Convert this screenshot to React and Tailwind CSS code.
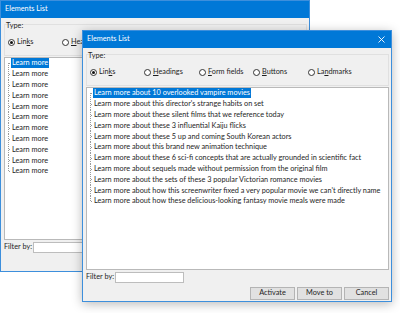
import React from 'react'

const longItems = [
    'Learn more about 10 overlooked vampire movies',
    "Learn more about this director's strange habits on set",
    'Learn more about these silent films that we reference today',
    'Learn more about these 3 influential Kaiju flicks',
    'Learn more about these 5 up and coming South Korean actors',
    'Learn more about this brand new animation technique',
    'Learn more about these 6 sci-fi concepts that are actually grounded in scientific fact',
    'Learn more about sequels made without permission from the original film',
    'Learn more about the sets of these 3 popular Victorian romance movies',
    "Learn more about how this screenwriter fixed a very popular movie we can't directly name",
    'Learn more about how these delicious-looking fantasy movie meals were made'
]

const shortItems = Array(11).fill('Learn more')

const radios = [
    { pre: 'Lin', key: 'k', post: 's', w: 'w-[54px]', checked: true },
    { pre: '', key: 'H', post: 'eadings', w: 'w-[55px]' },
    { pre: '', key: 'F', post: 'orm fields', w: 'w-[54px]' },
    { pre: '', key: 'B', post: 'uttons', w: 'w-[55px]' },
    { pre: 'La', key: 'n', post: 'dmarks', w: 'w-[60px]' }
]

function Radio({ r }) {
    return (
        <div className={`${r.w} shrink-0 flex items-center gap-[2px]`}>
            <span className="w-[7px] h-[7px] rounded-full border border-[#333] bg-white flex items-center justify-center">
                {r.checked && <span className="w-[3px] h-[3px] rounded-full bg-[#111]" />}
            </span>
            <span className="whitespace-nowrap">
                {r.pre}<span className="underline underline-offset-1">{r.key}</span>{r.post}
            </span>
        </div>
    )
}

function TreeStub({ first, last }) {
    return (
        <svg width="5" height="10.8" className="shrink-0" shapeRendering="crispEdges">
            <line x1="2.5" y1={first ? 5.4 : 0} x2="2.5" y2={last ? 5.4 : 10.8} stroke="#9a9a9a" strokeWidth="1" strokeDasharray="1 1" />
            <line x1="2.5" y1="5.5" x2="5" y2="5.5" stroke="#9a9a9a" strokeWidth="1" strokeDasharray="1 1" />
        </svg>
    )
}

function Dialog({ items, className, active }) {
    return (
        <div className={`w-[310px] h-[272px] border border-[#3d8fdc] bg-[#f0f0f0] flex flex-col ${className}`}>
            {/* Title bar */}
            <div className="h-[17px] shrink-0 bg-[#0078d7] text-white flex items-center justify-between pl-[4px] pr-[6px]">
                <span>Elements List</span>
                {active && (
                    <svg width="7" height="7" viewBox="0 0 7 7">
                        <path d="M0.5 0.5 L6.5 6.5 M6.5 0.5 L0.5 6.5" stroke="#fff" strokeWidth="0.9" />
                    </svg>
                )}
            </div>

            {/* Type group */}
            <div className="mt-[6px] ml-[3px] mr-[2px] h-[32px] shrink-0 border border-[#e0e0e0] flex flex-col">
                <div className="-mt-[4px] h-[10px] leading-[10px] pl-[1px]">Type:</div>
                <div className="mt-[6px] h-[10px] flex items-center pl-[3px]">
                    {radios.map((r, i) => <Radio key={i} r={r} />)}
                </div>
            </div>

            {/* List */}
            <div className="mt-[1px] ml-[3px] mr-[2px] h-[183px] shrink-0 bg-white border border-[#b9b9b9] overflow-hidden">
                <div className="pl-[1px]">
                    {items.map((item, i) => (
                        <div key={i} className="h-[10.8px] flex items-center">
                            <TreeStub first={i === 0} last={i === items.length - 1} />
                            <span className={`h-[10px] leading-[10px] px-[1px] whitespace-nowrap ${i === 0 ? 'bg-[#0078d7] text-white' : ''}`}>
                                {item}
                            </span>
                        </div>
                    ))}
                </div>
            </div>

            {/* Filter */}
            <div className="mt-[2px] h-[11px] shrink-0 flex items-center pl-[3px]">
                <span className="w-[29px] shrink-0 whitespace-nowrap">Filter by:</span>
                <div className="w-[69px] h-[11px] bg-white border border-[#bdbdbd]" />
            </div>

            {/* Buttons */}
            <div className="mt-[4px] h-[13px] shrink-0 flex justify-end gap-[2px] mr-[2px]">
                <div className="w-[45px] h-[13px] bg-[#e1e1e1] border border-[#b4b4b4] flex items-center justify-center">Activate</div>
                <div className="w-[45px] h-[13px] bg-[#e1e1e1] border border-[#b4b4b4] flex items-center justify-center">Move to</div>
                <div className="w-[45px] h-[13px] bg-[#e1e1e1] border border-[#b4b4b4] flex items-center justify-center">Cancel</div>
            </div>
        </div>
    )
}

export default function App() {
    return (
        <div
            className="relative w-[400px] h-[313px] bg-white overflow-hidden text-[7.3px] text-[#1e1e1e]"
            style={{ fontFamily: 'Lato, "Noto Sans", sans-serif' }}
        >
            <Dialog items={shortItems} className="absolute left-0 top-0" />
            <Dialog items={longItems} active className="absolute left-[82px] top-[30px] shadow-[0_2px_10px_rgba(0,0,0,0.28)]" />
        </div>
    )
}
